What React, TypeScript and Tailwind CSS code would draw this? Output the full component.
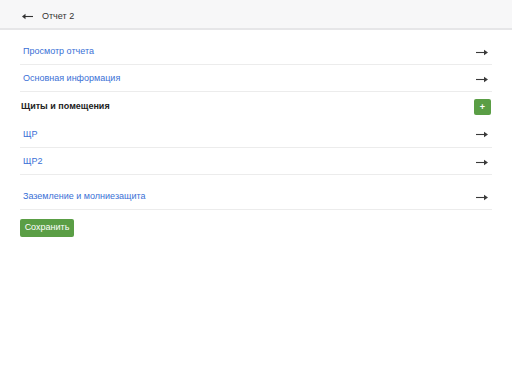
import React from "react";

const RightArrow = () => (
  <svg width="12" height="7" viewBox="0 0 12 7" className="text-[#3a3a3a]">
    <line x1="0" y1="3.5" x2="9" y2="3.5" stroke="currentColor" strokeWidth="1.1" />
    <path d="M8 0.8 L12 3.5 L8 6.2 Z" fill="currentColor" />
  </svg>
);

const LeftArrow = () => (
  <svg width="11" height="7" viewBox="0 0 11 7" className="text-[#333]">
    <line x1="2" y1="3.5" x2="11" y2="3.5" stroke="currentColor" strokeWidth="1.1" />
    <path d="M3.5 0.8 L0 3.5 L3.5 6.2 Z" fill="currentColor" />
  </svg>
);

function LinkRow({ label, last }: { label: string; last?: boolean }) {
  return (
    <div
      className={
        "flex h-[27px] items-center justify-between pl-[3px] pr-[4px] pt-[2px] " +
        (last ? "" : "border-b border-[#ececec]")
      }
    >
      <span className="text-[9px] text-[#3a70d6]">{label}</span>
      <RightArrow />
    </div>
  );
}

export default function App() {
  return (
    <div
      className="min-h-[381px] bg-white"
      style={{ fontFamily: '"Liberation Sans", Arial, sans-serif' }}
    >
      <div className="flex h-[30px] items-center gap-[9px] border-b-2 border-[#e6e6e8] bg-[#f7f7f8] pl-[22px] pt-[5px]">
        <LeftArrow />
        <span className="text-[9px] text-[#333]">Отчет 2</span>
      </div>

      <div className="px-5 pt-[8px]">
        <LinkRow label="Просмотр отчета" />
        <LinkRow label="Основная информация" />

        <div className="flex h-[28px] items-center justify-between pl-[1px] pr-[1px] pt-[2px]">
          <span className="text-[9px] font-bold text-[#222]">Щиты и помещения</span>
          <button className="flex h-[16px] w-[17px] items-center justify-center rounded-[2px] bg-[#5a9e45] text-[9px] font-bold leading-none text-white">
            +
          </button>
        </div>
        <div className="flex h-[28px] items-center justify-between border-b border-[#ececec] pl-[3px] pr-[4px] pt-[2px]">
          <span className="text-[9px] text-[#3a70d6]">ЩР</span>
          <RightArrow />
        </div>
        <LinkRow label="ЩР2" />

        <div className="mt-[8px]">
          <LinkRow label="Заземление и молниезащита" />
        </div>

        <button className="mt-[9px] h-[18px] w-[54px] rounded-[2px] bg-[#5a9e45] text-[9px] text-white">
          Сохранить
        </button>
      </div>
    </div>
  );
}
